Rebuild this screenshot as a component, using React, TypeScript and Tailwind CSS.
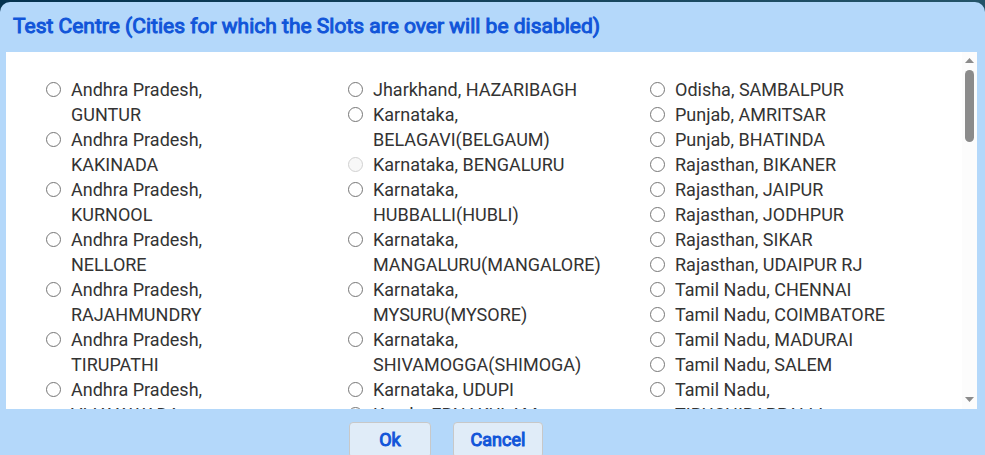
type City = { id: string; label: string; disabled?: boolean };

const columns: City[][] = [
  [
    { id: "guntur", label: "Andhra Pradesh,\nGUNTUR" },
    { id: "kakinada", label: "Andhra Pradesh,\nKAKINADA" },
    { id: "kurnool", label: "Andhra Pradesh,\nKURNOOL" },
    { id: "nellore", label: "Andhra Pradesh,\nNELLORE" },
    { id: "rajahmundry", label: "Andhra Pradesh,\nRAJAHMUNDRY" },
    { id: "tirupathi", label: "Andhra Pradesh,\nTIRUPATHI" },
    { id: "vijayawada", label: "Andhra Pradesh,\nVIJAYAWADA" },
  ],
  [
    { id: "hazaribagh", label: "Jharkhand, HAZARIBAGH" },
    { id: "belagavi", label: "Karnataka,\nBELAGAVI(BELGAUM)" },
    { id: "bengaluru", label: "Karnataka, BENGALURU", disabled: true },
    { id: "hubballi", label: "Karnataka,\nHUBBALLI(HUBLI)" },
    { id: "mangaluru", label: "Karnataka,\nMANGALURU(MANGALORE)" },
    { id: "mysuru", label: "Karnataka,\nMYSURU(MYSORE)" },
    { id: "shivamogga", label: "Karnataka,\nSHIVAMOGGA(SHIMOGA)" },
    { id: "udupi", label: "Karnataka, UDUPI" },
    { id: "ernakulam", label: "Kerala, ERNAKULAM" },
  ],
  [
    { id: "sambalpur", label: "Odisha, SAMBALPUR" },
    { id: "amritsar", label: "Punjab, AMRITSAR" },
    { id: "bhatinda", label: "Punjab, BHATINDA" },
    { id: "bikaner", label: "Rajasthan, BIKANER" },
    { id: "jaipur", label: "Rajasthan, JAIPUR" },
    { id: "jodhpur", label: "Rajasthan, JODHPUR" },
    { id: "sikar", label: "Rajasthan, SIKAR" },
    { id: "udaipur", label: "Rajasthan, UDAIPUR RJ" },
    { id: "chennai", label: "Tamil Nadu, CHENNAI" },
    { id: "coimbatore", label: "Tamil Nadu, COIMBATORE" },
    { id: "madurai", label: "Tamil Nadu, MADURAI" },
    { id: "salem", label: "Tamil Nadu, SALEM" },
    { id: "tiruchirappalli", label: "Tamil Nadu,\nTIRUCHIRAPPALLI" },
  ],
];

function CityOption({ id, label, disabled }: City) {
  return (
    <div className="flex items-start gap-[10px]">
      <input
        id={id}
        type="radio"
        name="city"
        disabled={disabled}
        className="mt-[5px] h-[15px] w-[15px] shrink-0 appearance-none rounded-full border border-[#767676] bg-white checked:border-4 checked:border-[#0075ff] disabled:border-[#d1d1d1] disabled:bg-[#f8f8f8]"
      />
      <label htmlFor={id} className="whitespace-pre-line">
        {label}
      </label>
    </div>
  );
}

function ScrollTrack() {
  return (
    <div aria-hidden="true" className="flex w-[15px] shrink-0 flex-col items-center bg-[#fcfcfc] pt-[6px] pb-[7px]">
      <svg width="9" height="5" viewBox="0 0 9 5" fill="#8b8b8b">
        <path d="M4.5 0L9 5H0z" />
      </svg>
      <div className="mt-[7px] h-[72px] w-[9px] rounded-full bg-[#8b8b8b]" />
      <svg className="mt-auto" width="9" height="5" viewBox="0 0 9 5" fill="#8b8b8b">
        <path d="M0 0H9L4.5 5z" />
      </svg>
    </div>
  );
}

export default function App() {
  return (
    <div className="h-screen overflow-hidden bg-linear-to-r from-[#04324f] to-[#245468] pt-[2px] font-['Roboto',sans-serif]">
      <section className="min-h-full rounded-t-[10px] bg-[#b4d8fa] px-[6px]">
        <h1 className="flex h-[50px] items-center px-[7px] pb-[3px] text-[21px] leading-[28px] text-[#1155d9] [-webkit-text-stroke:1px]">
          Test Centre (Cities for which the Slots are over will be disabled)
        </h1>
        <div className="mr-[2px] flex h-[357px] overflow-hidden bg-white">
          <div className="grid grow grid-cols-3 overflow-hidden pt-[25px] pr-[10px] pl-[40px] text-[18px] leading-[25px] text-[#333333]">
            {columns.map((cities) => (
              <div key={cities[0].id}>
                {cities.map((city) => (
                  <CityOption key={city.id} {...city} />
                ))}
              </div>
            ))}
          </div>
          <ScrollTrack />
        </div>
        <div className="flex justify-center gap-[22px] pt-[13px] pr-[93px] text-[18px] leading-[24px] text-[#1155d9] [-webkit-text-stroke:1px]">
          <button type="button" className="h-[36px] w-[82px] rounded-[4px] border border-[#c8c8c8] bg-[#e0ecf8]">
            Ok
          </button>
          <button type="button" className="h-[36px] w-[90px] rounded-[4px] border border-[#c8c8c8] bg-[#e0ecf8]">
            Cancel
          </button>
        </div>
      </section>
    </div>
  );
}
